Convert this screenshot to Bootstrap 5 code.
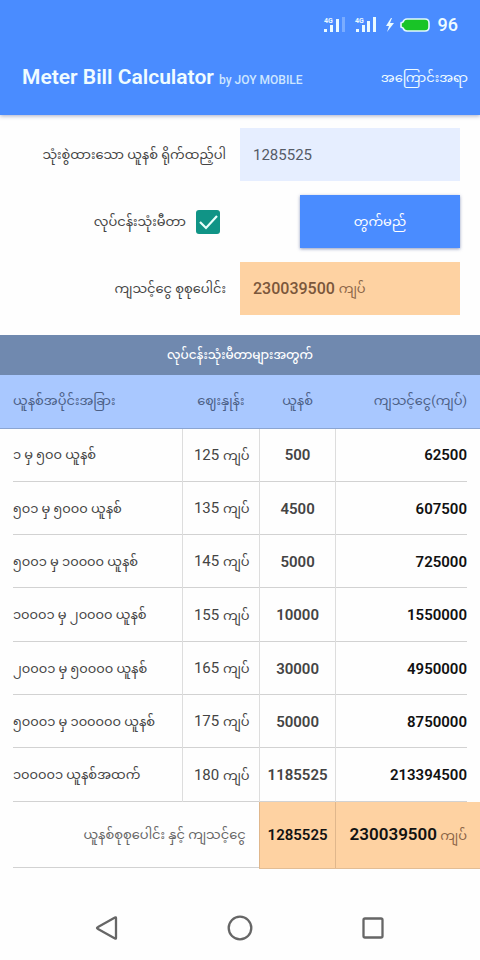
<!DOCTYPE html>
<html lang="my">
<head>
<meta charset="utf-8">
<meta name="viewport" content="width=device-width, initial-scale=1">
<title>Meter Bill Calculator</title>
<link href="https://cdn.jsdelivr.net/npm/bootstrap@5.3.0/dist/css/bootstrap.min.css" rel="stylesheet">
<style>
  body { font-family: Roboto, "Noto Sans Myanmar", "Noto Sans", sans-serif; font-size: 13px; line-height: 24px; color: #444; background: #fefefe; }
  .app-top { background: #4a8cff; color: #f0fcff; box-shadow: 0 1px 4px rgba(40, 50, 110, .4); }
  .status-line { height: 50px; padding-right: 22px; }
  .status-line span { font-size: 18px; font-weight: 500; }
  .title-line { height: 65px; padding: 0 12px 10px 22px; }
  .app-title { font-size: 21px; font-weight: 600; }
  .app-title small { font-size: 12px; font-weight: 500; color: #cde6ff; }
  .about-link { font-size: 13px; color: #f0fcff; }
  .entry-form { display: grid; grid-template-columns: 1fr 1fr; row-gap: 14px; padding: 13px 0 20px; }
  .entry-form > * { min-height: 53px; }
  .label-side { padding-right: 14px; }
  .tick-side { padding-right: 20px; gap: 10px; }
  .field-side { padding-right: 20px; }
  .flat-field { background: #e6eeff; border: 0; padding: 2px 13px 0; font-size: 15px; color: #555b66; }
  .flat-field:focus { background: #e6eeff; }
  .sum-box { background: #fed2a2; padding: 0 13px; color: #8b6547; }
  .sum-box strong { font-size: 16px; font-weight: 500; color: #7b573b; }
  .go-btn { width: 160px; background: #4a8cff; color: #fff; font-size: 13px; box-shadow: 0 1px 3px rgba(40, 60, 130, .5); }
  .form-check-input.tick { width: 24px; height: 24px; margin: 0; border-radius: 3px; border: 0; }
  .form-check-input.tick:checked { background-color: #109486; background-size: 24px 24px; background-image: url("data:image/svg+xml,%3Csvg xmlns='http://www.w3.org/2000/svg' viewBox='0 0 24 24'%3E%3Cpath d='M4 12l6 6L21 6' fill='none' stroke='%23e8fffb' stroke-width='2.2'/%3E%3C/svg%3E"); }
  .band { background: #7089af; color: #fff; height: 40px; font-size: 12px; }
  .rates { table-layout: fixed; --bs-table-bg: transparent; --line: linear-gradient(#d2d2d2, #d2d2d2); }
  .rates > :not(caption) > * > * { padding: 0 8px; border: 0; box-shadow: none; vertical-align: middle; }
  .rates > * > tr > :first-child { padding-left: 13px; }
  .rates > * > tr > :last-child { padding-right: 13px; text-align: right; }
  .rates thead th { height: 53px; background: #a9c8ff; color: #4c6086; font-weight: 400; border-bottom: 1px solid #8ba5d2; }
  .rates tbody tr { height: 53px; color: #444; }
  .rates tbody tr:nth-child(3n+1) { height: 54px; }
  .rates tbody tr, .rates tfoot tr { background: var(--line) center bottom / calc(100% - 26px) 1px no-repeat; }
  .rates tbody td + td, .rates tfoot td + td { border-left: 1px solid #ddd; }
  .rates tbody td:nth-child(2) { font-size: 15px; padding: 0 0 0 11px; }
  .rates tbody td:nth-child(2) span { font-size: 13px; }
  .rates tbody td:nth-child(3), .rates tfoot td:nth-child(2) { font-size: 15px; font-weight: 600; padding: 0; text-align: center; }
  .rates tbody td:nth-child(4) { font-size: 15px; font-weight: 600; color: #111; }
  .rates tfoot tr { height: 66px; }
  .rates tfoot td:first-child { text-align: right; padding-right: 13px; color: #666; }
  .rates tfoot td + td { background: #fed2a2; border-left-color: #e0b78c; border-bottom: 1px solid #e2bd95; color: #111; white-space: nowrap; }
  .rates tfoot strong { font-size: 17px; font-weight: 600; }
  .rates tfoot span { color: #8b6547; }
  .phone-nav { display: grid; grid-template-columns: 1fr 1fr 1fr; justify-items: center; padding: 43px 40px 16px; }
</style>
</head>
<body>
<header class="app-top position-relative">
  <div class="status-line d-flex align-items-center justify-content-end">
    <svg width="106" height="20" viewBox="0 0 106 20" aria-hidden="true">
      <g fill="#eafaff">
        <text x="0" y="8" font-size="7" font-weight="700">4G</text>
        <path d="M0 14h3v3H0zM6 10h3v7H6zM12 4h3v13h-3z"/>
        <path d="M18 2h3v15h-3z" opacity=".3"/>
        <text x="31" y="8" font-size="7" font-weight="700">4G</text>
        <path d="M32 14h3v3h-3zM38 10h3v7h-3zM43 6h3v11h-3zM49 2h3v15h-3z"/>
        <path d="M67 3l-5 8h3l-2 6 7-9h-4l2-5z"/>
      </g>
      <path d="M84 4h18q4 0 4 4v4q0 4-4 4H84q-3 0-4-3l-2-1V8l2-1q1-3 4-3z" transform="translate(-1)" fill="#19c427" stroke="#e3f8ff" stroke-width="1.6"/>
    </svg>
    <span class="ms-1 ps-1">96</span>
  </div>
  <div class="title-line d-flex align-items-center justify-content-between">
    <h1 class="app-title m-0">Meter Bill Calculator <small>by JOY MOBILE</small></h1>
    <a href="#about" class="about-link text-decoration-none">အကြောင်းအရာ</a>
  </div>
</header>
<main>
  <form class="entry-form">
    <label for="units" class="label-side d-flex align-items-center justify-content-end">သုံးစွဲထားသော ယူနစ် ရိုက်ထည့်ပါ</label>
    <div class="field-side d-flex"><input id="units" class="form-control flat-field rounded-0" type="text" inputmode="numeric" value="1285525"></div>
    <div class="tick-side d-flex align-items-center justify-content-end">
      <label for="business">လုပ်ငန်းသုံးမီတာ</label>
      <input id="business" class="form-check-input tick" type="checkbox" checked>
    </div>
    <div class="field-side d-flex justify-content-end"><button type="button" class="btn go-btn rounded-0 border-0">တွက်မည်</button></div>
    <label for="total" class="label-side d-flex align-items-center justify-content-end">ကျသင့်ငွေ စုစုပေါင်း</label>
    <div class="field-side d-flex"><output id="total" class="sum-box w-100 d-flex align-items-center gap-1"><strong>230039500</strong> ကျပ်</output></div>
  </form>
  <h2 class="band d-flex align-items-center justify-content-center m-0">လုပ်ငန်းသုံးမီတာများအတွက်</h2>
  <table class="table rates m-0">
    <colgroup><col style="width:38%"><col style="width:16%"><col style="width:16%"><col style="width:30%"></colgroup>
    <thead><tr><th scope="col">ယူနစ်အပိုင်းအခြား</th><th scope="col" class="text-center">ဈေးနှုန်း</th><th scope="col" class="text-center">ယူနစ်</th><th scope="col">ကျသင့်ငွေ(ကျပ်)</th></tr></thead>
    <tbody>
      <tr><td>၁ မှ ၅၀၀ ယူနစ်</td><td>125 <span>ကျပ်</span></td><td>500</td><td>62500</td></tr>
      <tr><td>၅၀၁ မှ ၅၀၀၀ ယူနစ်</td><td>135 <span>ကျပ်</span></td><td>4500</td><td>607500</td></tr>
      <tr><td>၅၀၀၁ မှ ၁၀၀၀၀ ယူနစ်</td><td>145 <span>ကျပ်</span></td><td>5000</td><td>725000</td></tr>
      <tr><td>၁၀၀၀၁ မှ ၂၀၀၀၀ ယူနစ်</td><td>155 <span>ကျပ်</span></td><td>10000</td><td>1550000</td></tr>
      <tr><td>၂၀၀၀၁ မှ ၅၀၀၀၀ ယူနစ်</td><td>165 <span>ကျပ်</span></td><td>30000</td><td>4950000</td></tr>
      <tr><td>၅၀၀၀၁ မှ ၁၀၀၀၀၀ ယူနစ်</td><td>175 <span>ကျပ်</span></td><td>50000</td><td>8750000</td></tr>
      <tr><td>၁၀၀၀၀၁ ယူနစ်အထက်</td><td>180 <span>ကျပ်</span></td><td>1185525</td><td>213394500</td></tr>
    </tbody>
    <tfoot><tr><td colspan="2">ယူနစ်စုစုပေါင်း နှင့် ကျသင့်ငွေ</td><td>1285525</td><td><strong>230039500</strong> <span>ကျပ်</span></td></tr></tfoot>
  </table>
</main>
<nav class="phone-nav" aria-label="System">
  <button type="button" class="btn p-0 border-0 lh-1" aria-label="Back"><svg width="32" height="32" viewBox="0 0 32 32" fill="none" stroke="#666" stroke-width="2.3" stroke-linejoin="round"><path d="M25 6v20q0 1-1 .5L7 17q-2-1 0-2L24 5.500q1-.5 1 .5z"/></svg></button>
  <button type="button" class="btn p-0 border-0 lh-1" aria-label="Home"><svg width="32" height="32" viewBox="0 0 32 32" fill="none" stroke="#666" stroke-width="2.300"><circle cx="16" cy="16" r="11.300"/></svg></button>
  <button type="button" class="btn p-0 border-0 lh-1" aria-label="Recent apps"><svg width="32" height="32" viewBox="0 0 32 32" fill="none" stroke="#666" stroke-width="2.300"><rect x="6.500" y="6.500" width="19" height="19" rx="1.500"/></svg></button>
</nav>
<script src="https://cdn.jsdelivr.net/npm/bootstrap@5.3.0/dist/js/bootstrap.bundle.min.js"></script>
</body>
</html>
